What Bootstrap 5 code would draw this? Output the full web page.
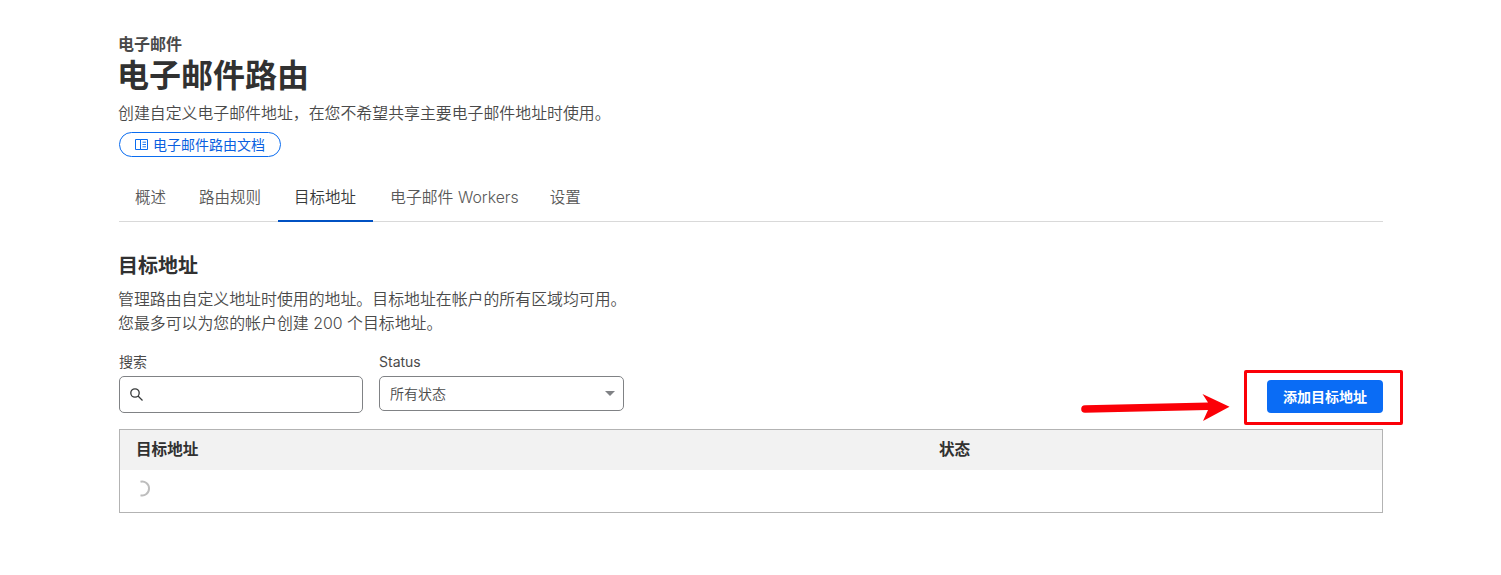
<!DOCTYPE html>
<html lang="zh">
<head>
<meta charset="utf-8">
<title>电子邮件路由</title>
<link href="https://cdn.jsdelivr.net/npm/bootstrap@5.3.0/dist/css/bootstrap.min.css" rel="stylesheet">
<style>
html,body{height:575px;overflow:hidden;background:#fff}
body{font-family:Inter,"Noto Sans CJK SC",sans-serif;color:#36393a;font-size:15px;position:relative}
.shell{width:1264px;margin-left:119px;padding-top:35px}
.eyebrow{font-size:16px;font-weight:700;line-height:18px;margin-bottom:2px;color:#4a4a4a;margin-left:-1px}
.title{font-size:32px;font-weight:700;line-height:41px;margin:0 0 0 -2px;color:#313131}
.intro{font-size:15.9px;line-height:24px;margin:6px 0 6px -1px;color:#4a4a4a;font-weight:350}
.docpill{display:inline-flex;align-items:center;gap:5px;height:25px;width:162px;justify-content:center;border:1px solid #0a6cf0;border-radius:13px;color:#0a5fe0;font-size:14px;font-weight:400;text-decoration:none;background:#fff}
.tabrow{display:flex;border-bottom:1px solid #d9d9d9;margin-top:19px;height:45px;margin-bottom:0}
.tabitem{padding:0 17px 0 16px;line-height:41px;font-size:15.5px;color:#595959;text-decoration:none;height:45px;white-space:nowrap;font-weight:350}
.tabitem.on{color:#36393a;border-bottom:2px solid #0051c3}
.tabitem.wide{padding:0 15px 0 17px;font-size:15.85px}
.sec{font-size:20px;font-weight:700;line-height:28px;margin:30px 0 8px -1px;color:#313131}
.secdesc{font-size:15.9px;line-height:24px;color:#4a4a4a;margin:0 0 16px -1px;font-weight:350}
.filters{display:flex;align-items:flex-start;margin-bottom:16px;gap:16px}
.fld{width:244px}
.fld.wider{width:245px}
.fldlabel{font-size:14px;line-height:20px;height:20px;margin-bottom:4px;display:block;color:#4a4a4a}
.inwrap{position:relative;height:37px;border:1px solid #808285;border-radius:5px;display:flex;align-items:center;padding-left:9px;background:#fff}
.selbox{height:35px;border:1px solid #808285;border-radius:5px;display:flex;align-items:center;justify-content:space-between;padding:0 8px 0 10px;font-size:14px;color:#4a4a4a;font-weight:350}
.caret{width:0;height:0;border-left:5.5px solid transparent;border-right:5.5px solid transparent;border-top:5.5px solid #808285;margin-top:1px}
.tbl{border:1px solid #b3b3b3;height:84px}
.thead{background:#f2f2f2;height:40px;display:flex;align-items:center;font-weight:700;font-size:15.6px;color:#313131}
.thead .c1{width:819px;padding-left:16px}
.tbody{padding:9px 0 0 17px;line-height:0}
.addbtn{position:absolute;left:1267px;top:380px;width:116px;height:33px;background:#0a6cf5;border:0;border-radius:4px;color:#fff;font-size:14px;font-weight:700;padding:0}
.redbox{position:absolute;left:1244px;top:370px;width:159px;height:55px;border:3px solid #fb0007;border-radius:2px;pointer-events:none}
.arrow{position:absolute;left:1078px;top:390px;pointer-events:none}
</style>
</head>
<body>
<div class="shell">
  <div class="eyebrow">电子邮件</div>
  <h1 class="title">电子邮件路由</h1>
  <p class="intro">创建自定义电子邮件地址，在您不希望共享主要电子邮件地址时使用。</p>
  <a class="docpill" href="#">
    <svg width="13" height="13" viewBox="0 0 13 13" fill="none" stroke="#0a6cf0" stroke-width="1"><path d="M.5 1.5h5v10h-5zM5.5 1.5h7v10h-7z"/><path d="M7.5 4.2h3.5M7.5 6.5h3.5M7.5 8.8h3.5" stroke-width=".9"/></svg>
    <span>电子邮件路由文档</span>
  </a>
  <nav class="tabrow">
    <a class="tabitem" href="#">概述</a>
    <a class="tabitem" href="#">路由规则</a>
    <a class="tabitem on" href="#">目标地址</a>
    <a class="tabitem wide" href="#">电子邮件 Workers</a>
    <a class="tabitem" href="#">设置</a>
  </nav>
  <h2 class="sec">目标地址</h2>
  <p class="secdesc">管理路由自定义地址时使用的地址。目标地址在帐户的所有区域均可用。<br>您最多可以为您的帐户创建 200 个目标地址。</p>
  <div class="filters">
    <div class="fld">
      <label class="fldlabel">搜索</label>
      <div class="inwrap">
        <svg width="15" height="15" viewBox="0 0 15 15" fill="none" stroke="#36393a" stroke-width="1.3"><circle cx="6" cy="6" r="4.2"/><path d="M9 9l4.5 4.5"/></svg>
      </div>
    </div>
    <div class="fld wider">
      <label class="fldlabel">Status</label>
      <div class="selbox"><span>所有状态</span><span class="caret"></span></div>
    </div>
  </div>
  <div class="tbl">
    <div class="thead"><div class="c1">目标地址</div><div>状态</div></div>
    <div class="tbody">
      <svg width="17" height="19" viewBox="0 0 17 19" fill="none" stroke="#bdbdbd" stroke-width="2"><path d="M3.5 2.8A6.9 6.9 0 1 1 3.5 16.2"/></svg>
    </div>
  </div>
</div>
<button class="addbtn" type="button">添加目标地址</button>
<div class="redbox"></div>
<svg class="arrow" width="156" height="34" viewBox="0 0 156 34"><path d="M7 15.2 L130 12.6 L124.5 4 L151.5 16.8 L125 31 L130 20 L7 22.8 A3.8 3.8 0 0 1 7 15.2Z" fill="#fb0007"/></svg>
<script src="https://cdn.jsdelivr.net/npm/bootstrap@5.3.0/dist/js/bootstrap.bundle.min.js"></script>
</body>
</html>
